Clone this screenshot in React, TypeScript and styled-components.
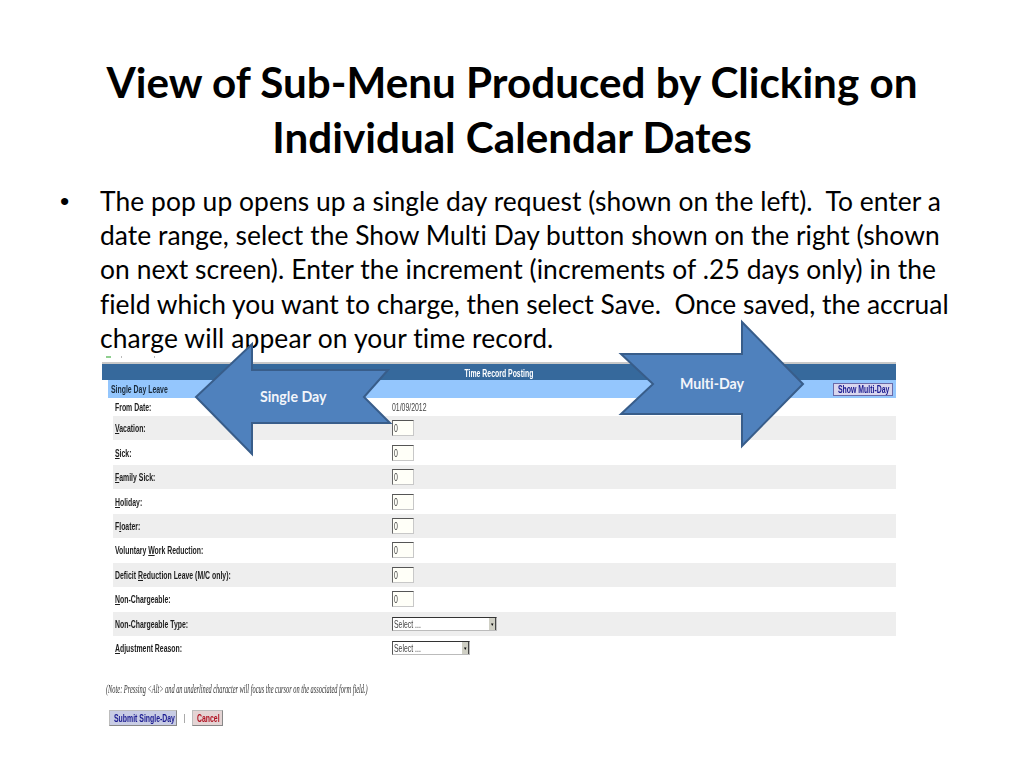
import React from "react";
import styled, { createGlobalStyle } from "styled-components";

const Global = createGlobalStyle`
  html, body { margin: 0; padding: 0; background: #fff; }
  body { font-family: "Lato", "Liberation Sans", sans-serif; color: #000; font-variant-ligatures: none; }
`;
const Slide = styled.div`
  position: relative; width: 1024px; height: 768px; overflow: hidden; background: #fff;
  padding-top: 54px; box-sizing: border-box;
`;
const Title = styled.h1`
  margin: 0 auto; width: 880px; text-align: center; font-family: "Lato", sans-serif;
  font-weight: 700; font-size: 42.2px; line-height: 55px; color: #000;
`;
const Bullets = styled.ul`
  list-style: none; margin: 20px 0 0; padding: 0 60px 0 100px; position: relative;
  font-size: 26.4px; line-height: 34.2px; white-space: nowrap;
  &::before { content: "•"; position: absolute; left: 60px; top: 0; font-family: "Liberation Sans", sans-serif; }
`;
const Line = styled.li<{ $track?: number }>`
  letter-spacing: ${p => p.$track || 0}px;
`;
const Panel = styled.div`
  margin: 1px 0 0 102px; width: 794px; filter: blur(0.45px);
  font-family: "Liberation Sans", sans-serif;
`;
const Remnants = styled.div`
  height: 2px; margin-bottom: 4px; padding-left: 4px; display: flex; gap: 10px;
`;
const Speck = styled.i<{ $w: number; $color: string; $gap?: number }>`
  display: block; width: ${p => p.$w}px; height: 2px; background: ${p => p.$color};
  margin-left: ${p => p.$gap || 0}px;
`;
const HeaderBar = styled.div`
  height: 18px; box-sizing: border-box; padding-top: 2px; background: #36699c; border-top: 2px solid #c9c9c9;
  display: flex; align-items: center; justify-content: center;
`;
const Squeezed = styled.span<{ $color?: string; $size?: number; $scale?: number; $weight?: number; $italic?: boolean; $serif?: boolean }>`
  display: inline-block; white-space: nowrap; transform: scaleX(${p => p.$scale || 0.627}); transform-origin: left center;
  color: ${p => p.$color || "#1c1c1c"}; font-size: ${p => p.$size || 11}px; font-weight: ${p => p.$weight || 700};
  font-style: ${p => (p.$italic ? "italic" : "normal")};
  font-family: ${p => (p.$serif ? '"Liberation Serif", serif' : '"Liberation Sans", sans-serif')};
  u { text-underline-offset: 1px; }
`;
const HeaderTitle = styled(Squeezed)`
  transform-origin: center;
`;
const SubBar = styled.div`
  margin-left: 6px; height: 18px; background: #94c6fd; display: flex; align-items: center;
  justify-content: space-between; padding: 0 3px 0 3px;
`;
const ShowButton = styled.div`
  width: 60px; height: 13px; box-sizing: border-box; border: 1px solid #6a6aa8; background: #d9d6ee;
  display: flex; align-items: center; padding-left: 4px; overflow: hidden;
`;
const Rows = styled.div`
  margin-left: 11px; display: flex; flex-direction: column;
`;
const DateRow = styled.div`
  height: 18px; display: grid; grid-template-columns: 277px 1fr; align-items: center; padding-left: 2px;
`;
const Row = styled.div<{ $shaded?: boolean }>`
  height: 24.45px; display: grid; grid-template-columns: 277px 1fr; align-items: center; padding-left: 2px;
  background: ${p => (p.$shaded ? "#eeeeee" : "#fff")};
`;
const Input = styled.div`
  width: 22px; height: 16px; box-sizing: border-box; background: #fffff8;
  border: 1px solid #c8c8c8; border-top: 1px solid #555; border-left: 1px solid #666;
  padding-left: 1px;
  display: flex; align-items: center;
`;
const Select = styled.div<{ $w: number }>`
  width: ${p => p.$w}px; height: 14px; box-sizing: border-box; background: #fff;
  border: 1px solid #bbb; border-top: 1px solid #333; border-left: 1px solid #555;
  display: flex; justify-content: space-between; align-items: stretch; padding-left: 1px;
`;
const SelectArrow = styled.div`
  width: 6px; background: #cfcfc4; border-right: 1px solid #444;
  display: flex; align-items: center; justify-content: center; font-size: 5px; color: #000;
`;
const Note = styled.div`
  margin: 22px 0 0 4px; height: 14px; display: flex; align-items: center;
`;
const Actions = styled.div`
  margin: 14px 0 0 7px; display: flex; align-items: center; gap: 7px;
`;
const ActionButton = styled.div<{ $w: number; $bg: string }>`
  width: ${p => p.$w}px; height: 16px; box-sizing: border-box; background: ${p => p.$bg};
  border: 1px solid #bdbdbd; border-right-color: #888; border-bottom-color: #888;
  display: flex; align-items: center; padding-left: 4px; overflow: hidden;
`;
const Sep = styled.div`
  width: 1px; height: 9px; background: #aaa;
`;
const ArrowShape = styled.svg<{ $left: number; $top: number }>`
  position: absolute; left: ${p => p.$left}px; top: ${p => p.$top}px; overflow: visible;
`;
const ArrowLabel = styled.div<{ $left: number; $top: number }>`
  position: absolute; left: ${p => p.$left}px; top: ${p => p.$top}px;
  font-family: "Lato", sans-serif; font-weight: 700; font-size: 14.2px; line-height: 18px; color: #f2f5fa;
`;

const rows: [React.ReactNode, boolean, "input" | number][] = [
  [<><u>V</u>acation:</>, true, "input"],
  [<><u>S</u>ick:</>, false, "input"],
  [<><u>F</u>amily Sick:</>, true, "input"],
  [<><u>H</u>oliday:</>, false, "input"],
  [<>F<u>l</u>oater:</>, true, "input"],
  [<>Voluntary <u>W</u>ork Reduction:</>, false, "input"],
  [<>Deficit <u>R</u>eduction Leave (M/C only):</>, true, "input"],
  [<><u>N</u>on-Chargeable:</>, false, "input"],
  [<>Non-Chargeable T<u>y</u>pe:</>, true, 105],
  [<><u>A</u>djustment Reason:</>, false, 78],
];

export default function App() {
  return (
    <Slide>
      <Global />
      <Title>View of Sub-Menu Produced by Clicking on Individual Calendar Dates</Title>
      <Bullets>
        <Line $track={0.066}>The pop up opens up a single day request (shown on the left).&nbsp; To enter a</Line>
        <Line $track={0.03}>date range, select the Show Multi Day button shown on the right (shown</Line>
        <Line $track={0.095}>on next screen). Enter the increment (increments of .25 days only) in the</Line>
        <Line>field which you want to charge, then select Save.&nbsp; Once saved, the accrual</Line>
        <Line $track={0.13}>charge will appear on your time record.</Line>
      </Bullets>
      <Panel>
        <Remnants>
          <Speck $w={5} $color="#8fcf8f" />
          <Speck $w={1} $color="#bbb" />
          <Speck $w={1} $color="#bbb" $gap={22} />
        </Remnants>
        <HeaderBar><HeaderTitle $color="#fff">Time Record Posting</HeaderTitle></HeaderBar>
        <SubBar>
          <Squeezed $color="#1a2a3a">Single Day Leave</Squeezed>
          <ShowButton><Squeezed $color="#1a1a90">Show Multi-Day</Squeezed></ShowButton>
        </SubBar>
        <Rows>
          <DateRow>
            <Squeezed>From Date:</Squeezed>
            <Squeezed $weight={400} $color="#444">01/09/2012</Squeezed>
          </DateRow>
          {rows.map(([label, shaded, kind], i) => (
            <Row key={i} $shaded={shaded}>
              <Squeezed>{label}</Squeezed>
              {kind === "input" ? (
                <Input><Squeezed $weight={400} $color="#444">0</Squeezed></Input>
              ) : (
                <Select $w={kind}>
                  <Squeezed $weight={400} $color="#444">Select ...</Squeezed>
                  <SelectArrow>▾</SelectArrow>
                </Select>
              )}
            </Row>
          ))}
        </Rows>
        <Note><Squeezed $serif $italic $weight={400} $color="#333" $size={12} $scale={0.53}>(Note: Pressing &lt;Alt&gt; and an underlined character will focus the cursor on the associated form field.)</Squeezed></Note>
        <Actions>
          <ActionButton $w={68} $bg="#c8cce4"><Squeezed $color="#1a1a90">Submit Single-Day</Squeezed></ActionButton>
          <Sep />
          <ActionButton $w={31} $bg="#e4d4d4"><Squeezed $color="#b01020">Cancel</Squeezed></ActionButton>
        </Actions>
      </Panel>
      <ArrowShape $left={195} $top={343} width="197" height="113" viewBox="0 0 197 113">
        <path d="M1 54 L57 1 V27 H193 L169 54 L195 80 H57 V111 Z" fill="#4f81bd" stroke="#385d8a" strokeWidth="2" />
      </ArrowShape>
      <ArrowLabel $left={260} $top={388}>Single Day</ArrowLabel>
      <ArrowShape $left={620} $top={321} width="185" height="127" viewBox="0 0 185 127">
        <path d="M1 33 H122 V1 L183 63 L122 125 V93 H1 L33 63 Z" fill="#4f81bd" stroke="#385d8a" strokeWidth="2" />
      </ArrowShape>
      <ArrowLabel $left={680} $top={375}>Multi-Day</ArrowLabel>
    </Slide>
  );
}
